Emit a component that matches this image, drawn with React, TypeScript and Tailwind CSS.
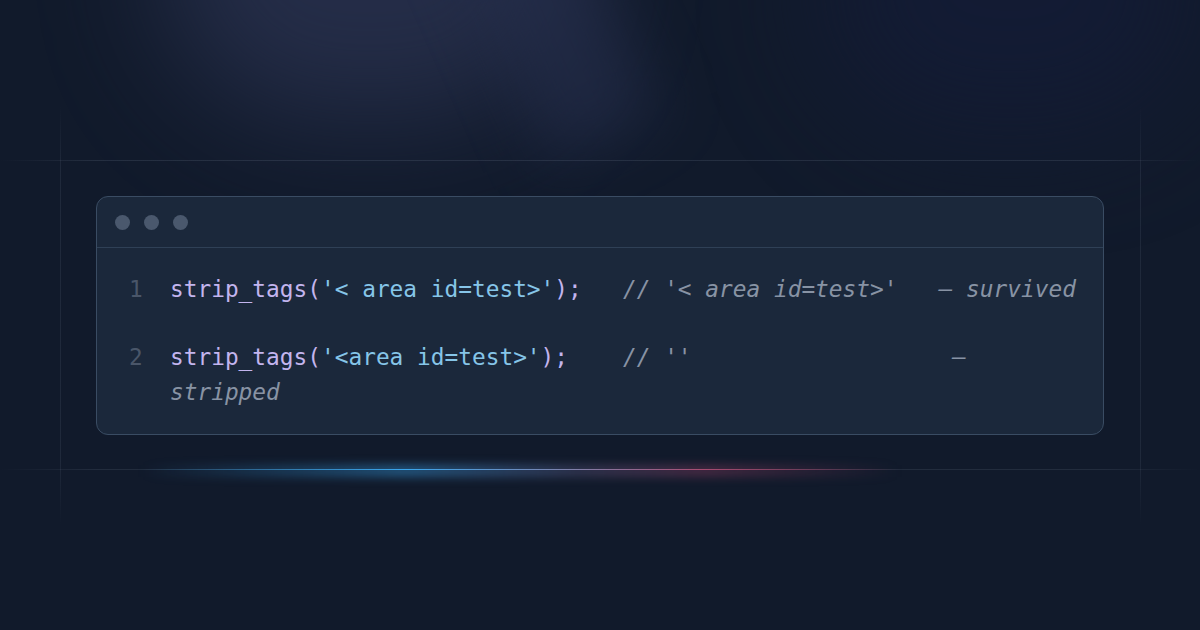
import React from "react";

const mono = "font-['DejaVu_Sans_Mono','Liberation_Mono',monospace]";

function Fn({ children }: { children: React.ReactNode }) {
  return <span className="text-[#c3b5ee]">{children}</span>;
}
function Str({ children }: { children: React.ReactNode }) {
  return <span className="text-[#86c5e8]">{children}</span>;
}
function Cm({ children }: { children: React.ReactNode }) {
  return <span className="italic text-[#8893a4]">{children}</span>;
}

export default function App() {
  return (
    <div className="relative w-[1200px] h-[630px] overflow-hidden bg-[#111a2b]">
      {/* top light glows */}
      <div className="pointer-events-none absolute left-[160px] top-[-200px] h-[320px] w-[420px] rounded-full bg-[#2d3554] opacity-70 blur-[60px]" />
      <div className="pointer-events-none absolute left-[500px] top-[-80px] h-[230px] w-[120px] rotate-[-24deg] bg-[#252e4c] opacity-60 blur-[30px]" />
      <div className="pointer-events-none absolute left-[820px] top-[-150px] h-[280px] w-[380px] rounded-full bg-[#141c38] opacity-70 blur-[60px]" />

      {/* guide lines */}
      <div className="pointer-events-none absolute left-0 top-[160px] h-px w-[1200px] bg-[linear-gradient(90deg,transparent,rgba(148,163,184,0.15)_8%,rgba(148,163,184,0.15)_92%,transparent)]" />
      <div className="pointer-events-none absolute left-0 top-[469px] h-px w-[1200px] bg-[linear-gradient(90deg,transparent,rgba(148,163,184,0.13)_8%,rgba(148,163,184,0.13)_92%,transparent)]" />
      <div className="pointer-events-none absolute left-[60px] top-[105px] h-[420px] w-px bg-[linear-gradient(180deg,transparent,rgba(148,163,184,0.11)_15%,rgba(148,163,184,0.11)_85%,transparent)]" />
      <div className="pointer-events-none absolute left-[1140px] top-[105px] h-[420px] w-px bg-[linear-gradient(180deg,transparent,rgba(148,163,184,0.11)_15%,rgba(148,163,184,0.11)_85%,transparent)]" />

      {/* accent line glow */}
      <div className="pointer-events-none absolute left-[140px] top-[465px] h-[12px] w-[760px] bg-[linear-gradient(90deg,transparent,rgba(56,160,230,0.45)_35%,rgba(120,110,160,0.3)_58%,rgba(170,70,110,0.35)_74%,transparent)] blur-[5px]" />
      <div className="pointer-events-none absolute left-[140px] top-[469px] h-px w-[760px] bg-[linear-gradient(90deg,transparent,#3aa6ec_35%,#8080aa_57%,#a84c72_74%,transparent)]" />

      {/* card */}
      <div className="relative px-[96px] pt-[196px]">
        <div className="rounded-[12px] border border-[#3a4c63] bg-[#1b283b]">
          <div className="flex h-[51px] items-center gap-[14px] border-b border-[#2f4056] pl-[18px]">
            <span className="h-[15px] w-[15px] rounded-full bg-[#4a586d]" />
            <span className="h-[15px] w-[15px] rounded-full bg-[#4a586d]" />
            <span className="h-[15px] w-[15px] rounded-full bg-[#4a586d]" />
          </div>
          <div className={`${mono} flex flex-col gap-[33px] pl-[32px] pr-[16px] pt-[24px] pb-[24px] text-[22.8px] leading-[35px]`}>
            <div className="flex">
              <span className="w-[41px] shrink-0 text-[#4a5669]">1</span>
              <span className="whitespace-pre">
                <Fn>strip_tags(</Fn>
                <Str>'&lt; area id=test&gt;'</Str>
                <Fn>);</Fn>
                {"   "}
                <Cm>{"// '< area id=test>'   — survived"}</Cm>
              </span>
            </div>
            <div className="flex">
              <span className="w-[41px] shrink-0 text-[#4a5669]">2</span>
              <span className="whitespace-pre">
                <Fn>strip_tags(</Fn>
                <Str>'&lt;area id=test&gt;'</Str>
                <Fn>);</Fn>
                {"    "}
                <Cm>{"// ''                   —\nstripped"}</Cm>
              </span>
            </div>
          </div>
        </div>
      </div>
    </div>
  );
}
